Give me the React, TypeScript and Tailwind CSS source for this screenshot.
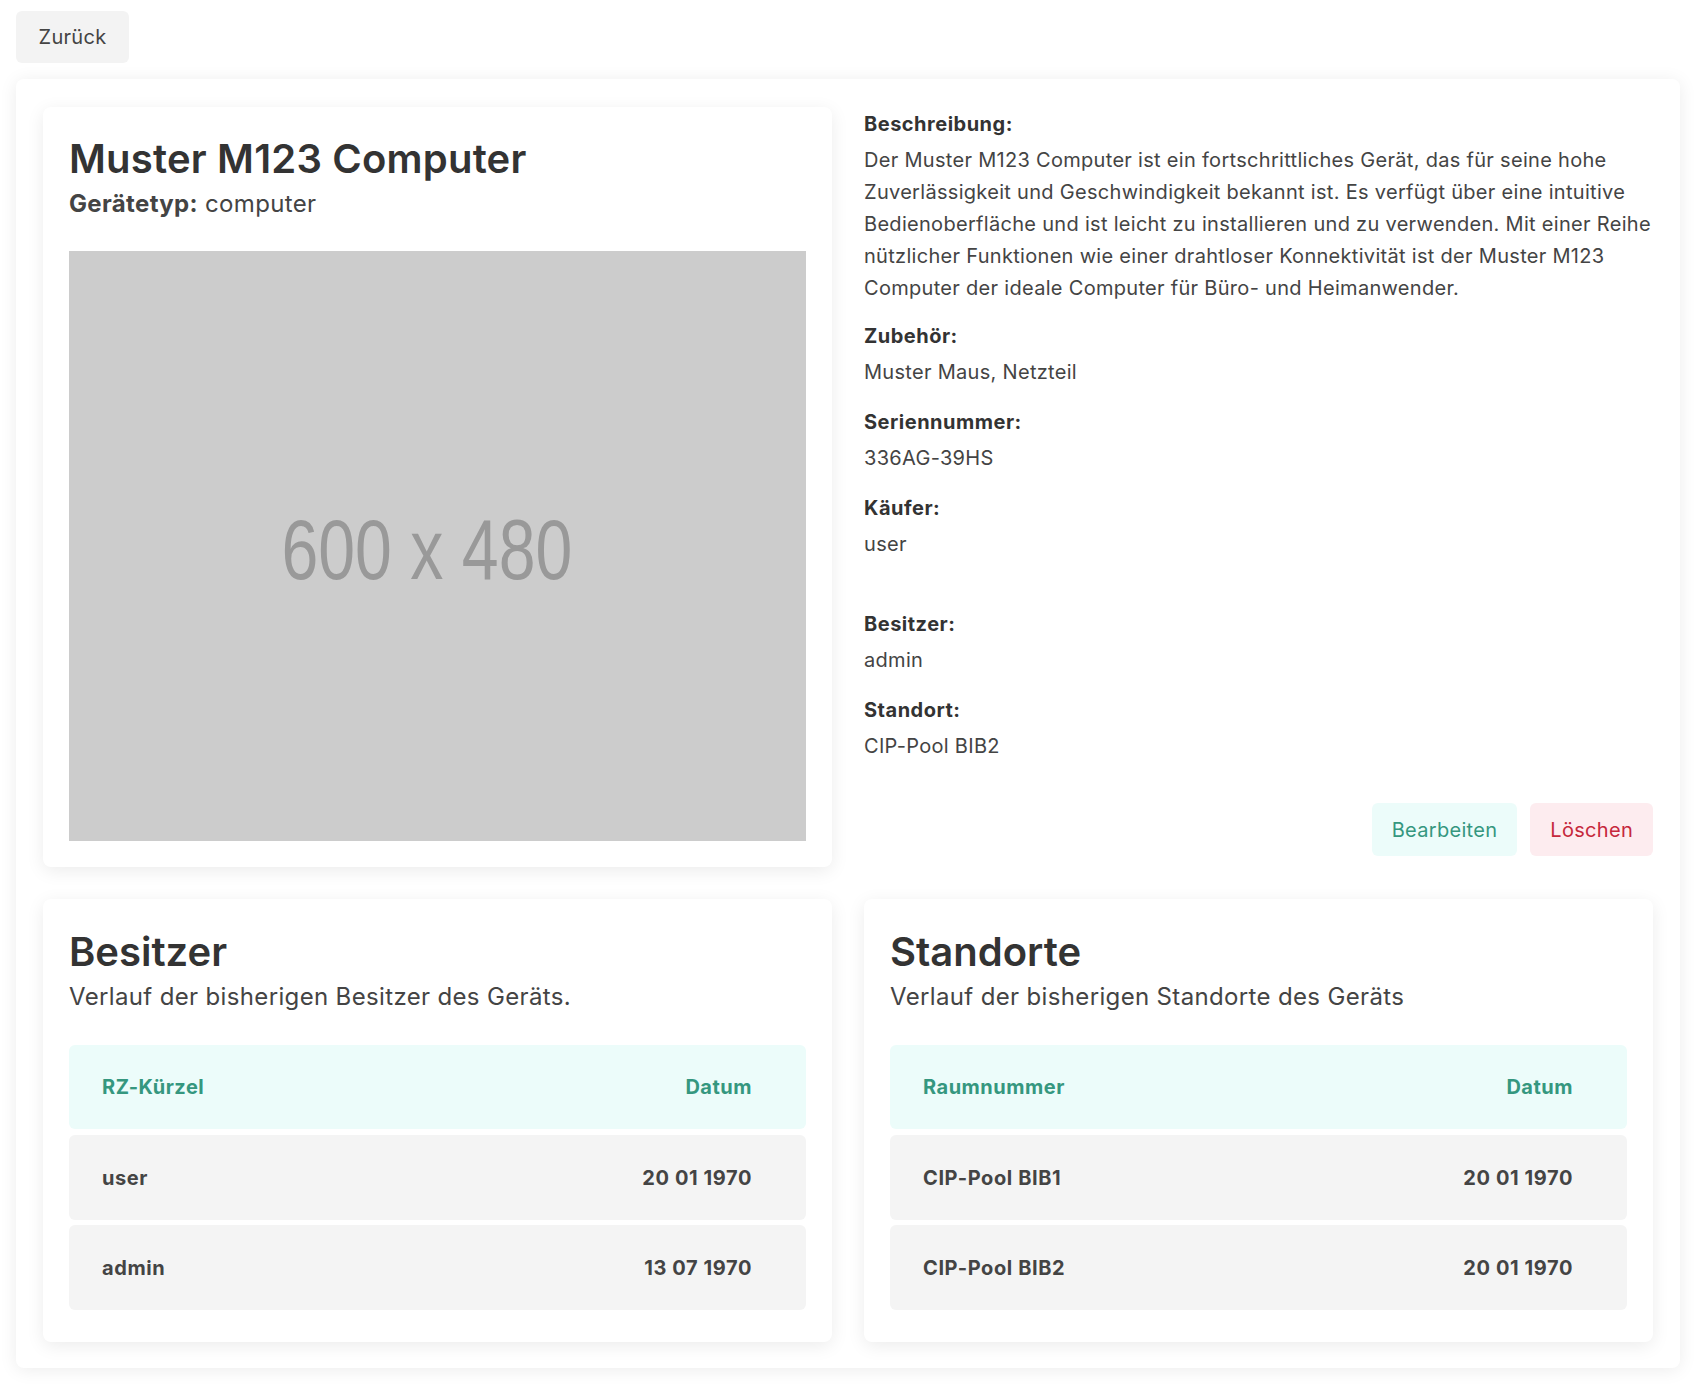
import React from "react";

const owners = [
  { name: "user", date: "20 01 1970" },
  { name: "admin", date: "13 07 1970" },
];

const locations = [
  { name: "CIP-Pool BIB1", date: "20 01 1970" },
  { name: "CIP-Pool BIB2", date: "20 01 1970" },
];

function Field(props: { label: string; children: React.ReactNode; className?: string }) {
  return (
    <div className={props.className}>
      <div className="text-xl leading-7 font-bold tracking-[0.5px] text-[#333]">{props.label}</div>
      <div className="mt-[6px] text-xl leading-8 text-[#444]">{props.children}</div>
    </div>
  );
}

function HistoryCard(props: {
  title: string;
  subtitle: string;
  col: string;
  rows: { name: string; date: string }[];
}) {
  return (
    <div className="rounded-lg bg-white pt-[29px] px-[26px] pb-8 shadow-[0_4px_18px_rgba(0,0,0,0.08)]">
      <h2 className="text-[40px] leading-[48px] font-semibold tracking-normal text-[#333]">{props.title}</h2>
      <p className="mt-[5px] text-2xl leading-8 tracking-[0.35px] text-[#444]">{props.subtitle}</p>
      <div className="mt-8 flex flex-col gap-[5px]">
        <div className="mb-px flex h-[84px] items-center justify-between rounded-md bg-[#ecfcfa] pl-[33px] pr-[54px] text-xl font-bold tracking-[0.5px] text-[#35977f]">
          <span>{props.col}</span>
          <span>Datum</span>
        </div>
        {props.rows.map((r) => (
          <div
            key={r.name}
            className="flex h-[85px] items-center justify-between rounded-md bg-[#f4f4f4] pl-[33px] pr-[54px] text-xl font-bold tracking-[0.6px] text-[#444]"
          >
            <span>{r.name}</span>
            <span>{r.date}</span>
          </div>
        ))}
      </div>
    </div>
  );
}

export default function App() {
  return (
    <div className="min-h-screen bg-white ml-4 mr-5 pt-[11px] tracking-[0.3px] font-['Inter','Noto_Sans',sans-serif]">
      <button className="h-[52px] w-[113px] rounded-md bg-[#f3f3f3] text-xl text-[#444]">Zurück</button>

      <div className="mt-4 rounded-lg bg-white px-[27px] pt-7 pb-[26px] shadow-[0_2px_18px_rgba(0,0,0,0.08)]">
        <div className="grid grid-cols-2 gap-8">
          {/* device card */}
          <div className="rounded-lg bg-white px-[26px] pt-7 pb-[26px] shadow-[0_4px_18px_rgba(0,0,0,0.08)]">
            <h1 className="text-[40px] leading-[48px] font-semibold tracking-[0.2px] text-[#333]">Muster M123 Computer</h1>
            <p className="mt-[5px] text-2xl leading-8 tracking-[0.35px] text-[#444]">
              <span className="font-bold">Gerätetyp:</span> computer
            </p>
            <div className="mt-[31px] flex h-[590px] w-full items-center justify-center bg-[#cccccc] pr-[22px] pt-[6px]">
              <span className="inline-block scale-x-[0.77] font-['Liberation_Sans',Arial,sans-serif] text-[86px] leading-none tracking-normal text-[#999999]">
                600 x 480
              </span>
            </div>
          </div>

          {/* details */}
          <div className="pt-[3px]">
            <Field label="Beschreibung:" className="mb-[18px]">
              Der Muster M123 Computer ist ein fortschrittliches Gerät, das für seine hohe
              <br />
              Zuverlässigkeit und Geschwindigkeit bekannt ist. Es verfügt über eine intuitive
              <br />
              Bedienoberfläche und ist leicht zu installieren und zu verwenden. Mit einer Reihe
              <br />
              nützlicher Funktionen wie einer drahtloser Konnektivität ist der Muster M123
              <br />
              Computer der ideale Computer für Büro- und Heimanwender.
            </Field>
            <Field label="Zubehör:" className="mb-5">
              Muster Maus, Netzteil
            </Field>
            <Field label="Seriennummer:" className="mb-5">
              336AG-39HS
            </Field>
            <Field label="Käufer:" className="mb-[50px]">
              user
            </Field>
            <Field label="Besitzer:" className="mb-5">
              admin
            </Field>
            <Field label="Standort:">CIP-Pool BIB2</Field>

            <div className="mt-[41px] flex justify-end gap-[13px]">
              <button className="h-[53px] rounded-md bg-[#ecfcfa] px-5 text-xl text-[#35977f]">Bearbeiten</button>
              <button className="h-[53px] rounded-md bg-[#fdecef] px-5 text-xl text-[#c6283c]">Löschen</button>
            </div>
          </div>

          <HistoryCard
            title="Besitzer"
            subtitle="Verlauf der bisherigen Besitzer des Geräts."
            col="RZ-Kürzel"
            rows={owners}
          />
          <HistoryCard
            title="Standorte"
            subtitle="Verlauf der bisherigen Standorte des Geräts"
            col="Raumnummer"
            rows={locations}
          />
        </div>
      </div>
    </div>
  );
}
